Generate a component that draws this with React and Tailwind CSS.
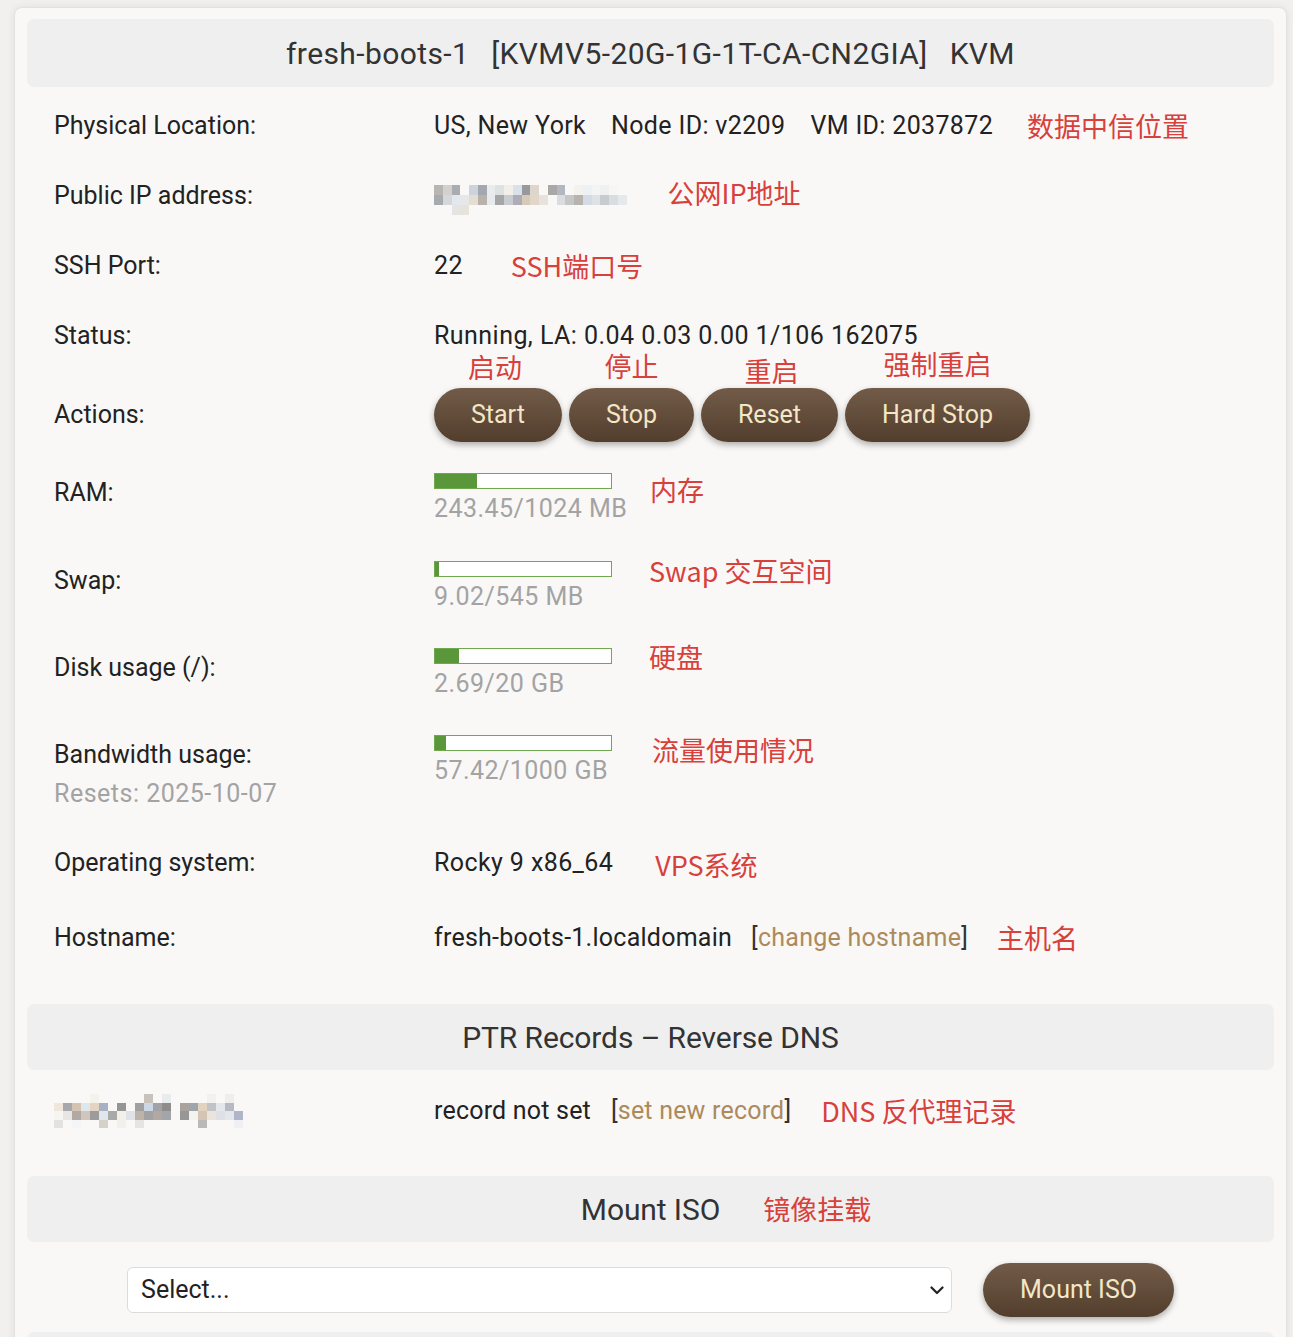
import React from 'react'

const ipMosaic = [
    ['#b8b5b2', '#d4d1cd', '#a9adb1', '#f9f8f7', '#ccd3dc', '#a3a8b0', '#e9ebec', '#dfe2e4', '#f2efe8', '#d9e1ea', '#97999c', '#dcd6cc', '#f9f8f7', '#aaa8a6', '#b1b8c2', '#f9f8f7', '#f3f2ef', '#ecf2f3', '#f4f4f2', '#eef1f2', '#f6f6f4', '#f9f8f7'],
    ['#a8abae', '#d5d8db', '#e2e8ee', '#e6e7e8', '#e4ddd2', '#b8b2aa', '#e6ebf0', '#a4a6a8', '#c8ccd0', '#aeacb6', '#d6cbb8', '#e2d7c6', '#e7e3dc', '#f9f8f7', '#d9dddf', '#c4c6c7', '#b7b3ae', '#d4dbe2', '#dfe2e5', '#c9ccce', '#d8dde2', '#e6e9eb'],
    ['#f9f8f7', '#f9f8f7', '#e5e4e2', '#e8e2dc', '#f9f8f7', '#f9f8f7', '#f9f8f7', '#f9f8f7', '#f9f8f7', '#f9f8f7', '#f9f8f7', '#f9f8f7', '#f9f8f7', '#f9f8f7', '#f9f8f7', '#f9f8f7', '#f9f8f7', '#f9f8f7', '#f9f8f7', '#f9f8f7', '#f9f8f7', '#f9f8f7'],
]

const ptrMosaic = [
    ['#f9f8f7', '#f9f8f7', '#f9f8f7', '#f9f8f7', '#f4f2ea', '#f9f8f7', '#f9f8f7', '#f9f8f7', '#f9f8f7', '#f9f8f7', '#c9c2bb', '#f9f8f7', '#e9ecec', '#f9f8f7', '#f9f8f7', '#f9f8f7', '#f9f8f7', '#f1f1f1', '#f9f8f7', '#eeeeee', '#f9f8f7'],
    ['#efe6dc', '#a7a8ae', '#d3c3b0', '#e0e6ee', '#e4d5c3', '#a8b1c4', '#f9f8f7', '#959595', '#f9f8f7', '#a0a0a0', '#cdd8e6', '#a0a3a6', '#908c89', '#f9f8f7', '#a9a29e', '#a0a5ad', '#e2d2c0', '#c2c3c6', '#e4e7eb', '#b7b9c3', '#f9f8f7'],
    ['#f6f5f2', '#e8e6e0', '#b1aaa4', '#d1c6bc', '#9c9c9c', '#e0e6ec', '#a9a9aa', '#f3efe9', '#dfe3e7', '#bfb3a8', '#a3a2a3', '#b2a8a1', '#a2a6ab', '#f9f8f7', '#979797', '#f5f3f0', '#d4c4b4', '#ebe4dc', '#dde1e5', '#e3e6ea', '#b0b6c8'],
    ['#e2e2e1', '#f9f8f7', '#f4f5f6', '#f9f8f7', '#f9f8f7', '#d6d0ca', '#f9f8f7', '#f3f0ec', '#f9f8f7', '#e4e4e4', '#f9f8f7', '#f9f8f7', '#f9f8f7', '#f9f8f7', '#f9f8f7', '#f9f8f7', '#b9b9b9', '#f9f8f7', '#f9f8f7', '#f9f8f7', '#eef0f3'],
]

function Mosaic({ rows, cellW, cellH }) {
    return (
        <div className="flex flex-col">
            {rows.map((row, i) => (
                <div key={i} className="flex">
                    {row.map((c, j) => (
                        <div key={j} style={{ width: cellW, height: cellH, backgroundColor: c }} />
                    ))}
                </div>
            ))}
        </div>
    )
}

function Note({ children, className = '' }) {
    return (
        <span className={`font-['Noto_Sans_CJK_SC',sans-serif] text-[27px] leading-[34px] tracking-normal text-[#d8403b] whitespace-nowrap ${className}`}>
            {children}
        </span>
    )
}

function SectionHeader({ children }) {
    return (
        <div className="h-[66px] rounded-[7px] bg-[#efefef] flex items-center justify-center text-[30px] tracking-[-0.1px] text-[#333]">
            {children}
        </div>
    )
}

function BrownButton({ children, note, noteClass }) {
    return (
        <div className="relative">
            {note && (
                <div className={`absolute left-1/2 -translate-x-1/2 font-['Noto_Sans_CJK_SC',sans-serif] text-[27px] leading-[22px] text-[#d8403b] whitespace-nowrap ${noteClass}`}>
                    {note}
                </div>
            )}
            <button className="h-[54px] rounded-full bg-linear-to-b from-[#725c49] to-[#533d2c] px-[37px] text-[25px] text-[#f3e7c8] shadow-[0_3px_6px_rgba(0,0,0,0.3)]">
                {children}
            </button>
        </div>
    )
}

function Bar({ percent, text }) {
    return (
        <div className="w-[178px]">
            <div className="h-[16px] border border-[#6fa84f] bg-white">
                <div className="h-full bg-[#5a973a]" style={{ width: `${percent}%` }} />
            </div>
            <div className="mt-[5px] text-[25px] leading-[30px] tracking-[0.45px] text-[#a3a3a3] whitespace-nowrap">{text}</div>
        </div>
    )
}

export default function App() {
    return (
        <div className="min-h-screen bg-[#f1f0ef] pt-[7px] pl-[14px] font-['Roboto',sans-serif] text-[#222]">
            <div className="w-[1273px] rounded-[8px] border border-[#e3e2e0] bg-[#f9f8f7] px-[12px] pt-[11px] pb-[40px] shadow-[0_0_8px_rgba(0,0,0,0.07)]">
                {/* Title */}
                <div className="h-[68px] rounded-[7px] bg-[#efefef] flex items-center justify-center gap-[22px] text-[30px] tracking-[0.4px] text-[#333]">
                    <span>fresh-boots-1</span>
                    <span>[KVMV5-20G-1G-1T-CA-CN2GIA]</span>
                    <span>KVM</span>
                </div>

                {/* Info rows */}
                <div className="mt-[4px] pl-[27px] text-[25px]">
                    <div className="flex h-[70px] items-center">
                        <div className="w-[380px] shrink-0">Physical Location:</div>
                        <div className="flex items-center tracking-[0.35px]">
                            <span>US, New York</span>
                            <span className="ml-[25px]">Node ID: v2209</span>
                            <span className="ml-[25px]">VM ID: 2037872</span>
                        </div>
                        <Note className="ml-[34px]">数据中信位置</Note>
                    </div>

                    <div className="flex h-[70px] items-center">
                        <div className="w-[380px] shrink-0">Public IP address:</div>
                        <div className="mt-[8px]">
                            <Mosaic rows={ipMosaic} cellW={8.75} cellH={10} />
                        </div>
                        <Note className="ml-[41px] -mt-[6px]">公网IP地址</Note>
                    </div>

                    <div className="flex h-[70px] items-center">
                        <div className="w-[380px] shrink-0">SSH Port:</div>
                        <span className="tracking-[0.35px]">22</span>
                        <Note className="ml-[48px]">SSH端口号</Note>
                    </div>

                    <div className="flex h-[70px] items-center">
                        <div className="w-[380px] shrink-0">Status:</div>
                        <div className="leading-[28px] tracking-[0.45px]">Running, LA: 0.04 0.03 0.00 1/106 162075</div>
                    </div>

                    <div className="flex h-[88px] items-center">
                        <div className="w-[380px] shrink-0">Actions:</div>
                        <div className="flex gap-[7px]">
                            <BrownButton note="启动" noteClass="bottom-[calc(100%+10px)] -ml-[3px]">Start</BrownButton>
                            <BrownButton note="停止" noteClass="bottom-[calc(100%+11px)]">Stop</BrownButton>
                            <BrownButton note="重启" noteClass="bottom-[calc(100%+6px)] ml-[2px]">Reset</BrownButton>
                            <BrownButton note="强制重启" noteClass="bottom-[calc(100%+13px)]">Hard Stop</BrownButton>
                        </div>
                    </div>

                    <div className="flex h-[88px] items-start pt-[14px]">
                        <div className="w-[380px] shrink-0 leading-[39px]">RAM:</div>
                        <Bar percent={23.8} text="243.45/1024 MB" />
                        <Note className="ml-[38px]">内存</Note>
                    </div>

                    <div className="flex h-[87px] items-start pt-[14px]">
                        <div className="w-[380px] shrink-0 leading-[39px]">Swap:</div>
                        <Bar percent={2.5} text="9.02/545 MB" />
                        <Note className="ml-[37px] -mt-[7px]">Swap 交互空间</Note>
                    </div>

                    <div className="flex h-[87px] items-start pt-[14px]">
                        <div className="w-[380px] shrink-0 leading-[39px]">Disk usage (/):</div>
                        <Bar percent={13.4} text="2.69/20 GB" />
                        <Note className="ml-[37px] -mt-[8px]">硬盘</Note>
                    </div>

                    <div className="flex h-[107px] items-start pt-[14px]">
                        <div className="w-[380px] shrink-0 leading-[39px]">
                            <div>Bandwidth usage:</div>
                            <div className="text-[#a3a3a3] tracking-[0.5px]">Resets: 2025-10-07</div>
                        </div>
                        <Bar percent={6.5} text="57.42/1000 GB" />
                        <Note className="ml-[40px] -mt-[2px]">流量使用情况</Note>
                    </div>

                    <div className="flex h-[70px] items-center">
                        <div className="w-[380px] shrink-0">Operating system:</div>
                        <span className="tracking-[0.4px]">Rocky 9 x86_64</span>
                        <Note className="ml-[42px] mt-[4px]">VPS系统</Note>
                    </div>

                    <div className="flex h-[80px] items-center">
                        <div className="w-[380px] shrink-0">Hostname:</div>
                        <span className="tracking-[0.25px]">fresh-boots-1.localdomain</span>
                        <span className="ml-[19px] text-[#333] tracking-[0.25px]">
                            [<a href="#" className="text-[#ad8a5c]">change hostname</a>]
                        </span>
                        <Note className="ml-[29px]">主机名</Note>
                    </div>
                </div>

                {/* PTR */}
                <div className="mt-[26px]">
                    <SectionHeader>PTR Records – Reverse DNS</SectionHeader>
                </div>
                <div className="flex h-[82px] items-center pl-[27px] text-[25px]">
                    <div className="w-[380px] shrink-0">
                        <Mosaic rows={ptrMosaic} cellW={9} cellH={8.5} />
                    </div>
                    <span className="tracking-[0.2px]">record not set</span>
                    <span className="ml-[20px] text-[#333] tracking-[0.2px]">
                        [<a href="#" className="text-[#ad8a5c]">set new record</a>]
                    </span>
                    <Note className="ml-[30px]">DNS 反代理记录</Note>
                </div>

                {/* Mount ISO */}
                <div className="mt-[24px]">
                    <SectionHeader>
                        <span className="relative">
                            Mount ISO
                            <Note className="absolute left-full top-1/2 -translate-y-1/2 ml-[43px]">镜像挂载</Note>
                        </span>
                    </SectionHeader>
                </div>
                <div className="flex items-center justify-center gap-[31px] pt-[21px]">
                    <div className="relative">
                        <select className="w-[825px] h-[46px] appearance-none rounded-[6px] border border-[#dcdcdc] bg-white pl-[13px] text-[25px] text-[#222] outline-none">
                            <option>Select...</option>
                        </select>
                        <svg className="pointer-events-none absolute right-[8px] top-1/2 -translate-y-1/2" width="14" height="10" viewBox="0 0 14 10" fill="none">
                            <path d="M1.5 2.5 L7 8 L12.5 2.5" stroke="#222" strokeWidth="2.2" strokeLinecap="round" strokeLinejoin="round" />
                        </svg>
                    </div>
                    <BrownButton>Mount ISO</BrownButton>
                </div>

                <div className="mt-[15px]">
                    <SectionHeader> </SectionHeader>
                </div>
            </div>
        </div>
    )
}
